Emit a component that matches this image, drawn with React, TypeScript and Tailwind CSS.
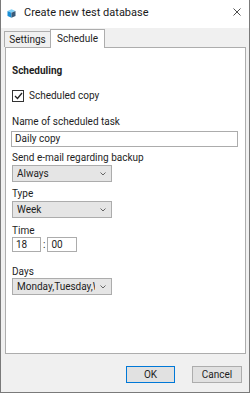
import React from 'react';

const font = { fontFamily: 'Roboto, "Noto Sans", sans-serif' };

const Chevron: React.FC = () => (
  <svg width="6" height="4" viewBox="0 0 6 4" className="shrink-0">
    <path d="M0.5 0.5 L3 3 L5.5 0.5" fill="none" stroke="#555" strokeWidth="0.9" />
  </svg>
);

const Select: React.FC<{ value: string; className?: string }> = ({ value, className }) => (
  <div
    className={`flex h-[17px] w-[100px] items-center border border-[#acacac] bg-[#e5e5e5] pl-[4px] pr-[5px] ${className ?? ''}`}
  >
    <div className="flex-1 whitespace-nowrap text-[10px] leading-[15px] text-[#1e1e1e]">
      <div className="w-[78px] overflow-hidden">{value}</div>
    </div>
    <Chevron />
  </div>
);

const Label: React.FC<{ children: React.ReactNode; className?: string }> = ({ children, className }) => (
  <div className={`h-[12px] text-[10px] leading-[12px] text-[#1e1e1e] ${className ?? ''}`}>{children}</div>
);

export default function App() {
  return (
    <div
      className="flex h-[393px] w-[250px] flex-col border-x border-b border-[#7a7a7a] bg-[#f0f0f0] text-black"
      style={font}
    >
      {/* title bar */}
      <div className="flex h-[28px] shrink-0 items-start bg-white">
        <svg width="9" height="9" viewBox="0 0 9 9" className="ml-[6px] mt-[9px]">
          <path d="M0.5 2 L4.5 0.2 L8.5 2 L4.5 3.8 Z" fill="#7fd0f5" />
          <path d="M0.5 2 L4.5 3.8 L4.5 8.8 L0.5 7 Z" fill="#1a8fd6" />
          <path d="M8.5 2 L4.5 3.8 L4.5 8.8 L8.5 7 Z" fill="#3a5a78" />
        </svg>
        <div className="ml-[8px] mt-[6px] text-[11px] leading-[14px] text-[#1a1a1a]">Create new test database</div>
        <div className="flex-1" />
        <svg width="8" height="8" viewBox="0 0 8 8" className="mr-[8px] mt-[8px]">
          <path d="M0.5 0.5 L7.5 7.5 M7.5 0.5 L0.5 7.5" stroke="#222" strokeWidth="0.8" />
        </svg>
      </div>

      {/* tabs */}
      <div className="flex h-[19px] shrink-0 items-end">
        <div className="ml-[3px] flex h-[16px] w-[47px] items-center justify-center border-x border-t border-[#adadad] bg-[#f0f0f0] text-[10px] leading-[12px] text-[#1e1e1e]">
          Settings
        </div>
        <div className="relative z-10 -mb-px -ml-px flex h-[19px] w-[55px] items-start justify-center border-x border-t border-[#adadad] bg-white pt-[3px] text-[10px] leading-[12px] text-[#1e1e1e]">
          Schedule
        </div>
      </div>

      {/* tab panel */}
      <div className="ml-[4px] mr-[3px] flex flex-1 flex-col border border-[#adadad] bg-white pl-[6px]">
        <div className="mt-[17px] h-[12px] text-[10px] font-bold leading-[12px] text-[#1e1e1e]">Scheduling</div>

        <div className="mt-[13px] flex h-[12px] items-center">
          <div className="flex h-[12px] w-[12px] items-center justify-center border border-[#333] bg-white">
            <svg width="9" height="8" viewBox="0 0 9 8">
              <path d="M1 4 L3.5 6.5 L8 1" fill="none" stroke="#222" strokeWidth="1.3" />
            </svg>
          </div>
          <span className="ml-[5px] text-[10px] leading-[12px] text-[#1e1e1e]">Scheduled copy</span>
        </div>

        <Label className="mt-[14px]">Name of scheduled task</Label>
        <div className="ml-[-1px] mt-[3px] flex h-[16px] w-[227px] items-center border border-[#acacac] bg-white pl-[3px] text-[10px] leading-[14px] text-[#1e1e1e]">
          Daily copy
        </div>

        <Label className="mt-[5px]">Send e-mail regarding backup</Label>
        <Select value="Always" className="mt-[1px]" />

        <Label className="mt-[6px]">Type</Label>
        <Select value="Week" className="mt-[1px]" />

        <Label className="mt-[7px]">Time</Label>
        <div className="flex h-[15px] items-center">
          <div className="flex h-[15px] w-[29px] items-center border border-[#acacac] bg-white pl-[3px] text-[10px] leading-[13px] text-[#1e1e1e]">
            18
          </div>
          <span className="mx-[2px] text-[10px] leading-[13px] text-[#1e1e1e]">:</span>
          <div className="flex h-[15px] w-[30px] items-center border border-[#acacac] bg-white pl-[3px] text-[10px] leading-[13px] text-[#1e1e1e]">
            00
          </div>
        </div>

        <Label className="mt-[14px]">Days</Label>
        <Select value="Monday,Tuesday,Wednesday" className="mt-0" />
      </div>

      {/* buttons */}
      <div className="mb-[9px] mt-[12px] flex h-[17px] shrink-0 justify-end pr-[7px]">
        <div className="flex h-[17px] w-[49px] items-center justify-center border border-[#0078d7] bg-[#e1e1e1] text-[10px] leading-[13px] text-[#1e1e1e]">
          OK
        </div>
        <div className="ml-[17px] flex h-[17px] w-[50px] items-center justify-center border border-[#adadad] bg-[#e1e1e1] text-[10px] leading-[13px] text-[#1e1e1e]">
          Cancel
        </div>
      </div>
    </div>
  );
}
